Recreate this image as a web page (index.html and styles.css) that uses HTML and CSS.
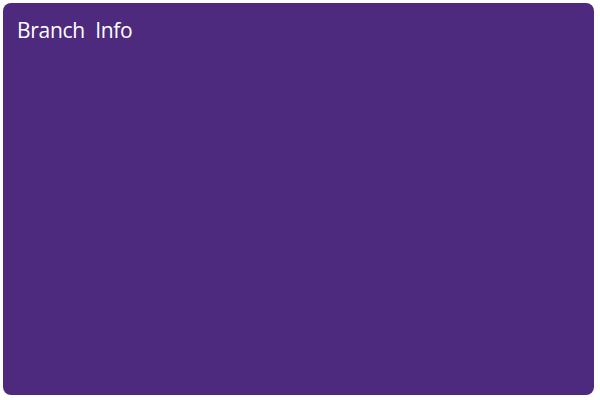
FILE: index.html
```html
<!DOCTYPE html>
<html>
<head>
<meta charset="utf-8">
<link rel="stylesheet" href="styles.css">
</head>
<body>
<div class="card">
  <h1 class="title">Branch&nbsp; Info</h1>
</div>
</body>
</html>
```
FILE: styles.css
```css
html, body { margin: 0; padding: 0; background: #ffffff; }
body { padding: 3px 0 0 3px; }
.card {
  width: 591px;
  height: 392px;
  background: #4e2a7f;
  border-radius: 8px;
  box-sizing: border-box;
  padding: 13px 14px;
}
.title {
  margin: 0;
  font-family: "Open Sans", "Noto Sans", sans-serif;
  font-weight: 400;
  font-size: 21px;
  line-height: 28px;
  letter-spacing: -0.3px;
  color: #ffffff;
}
```
